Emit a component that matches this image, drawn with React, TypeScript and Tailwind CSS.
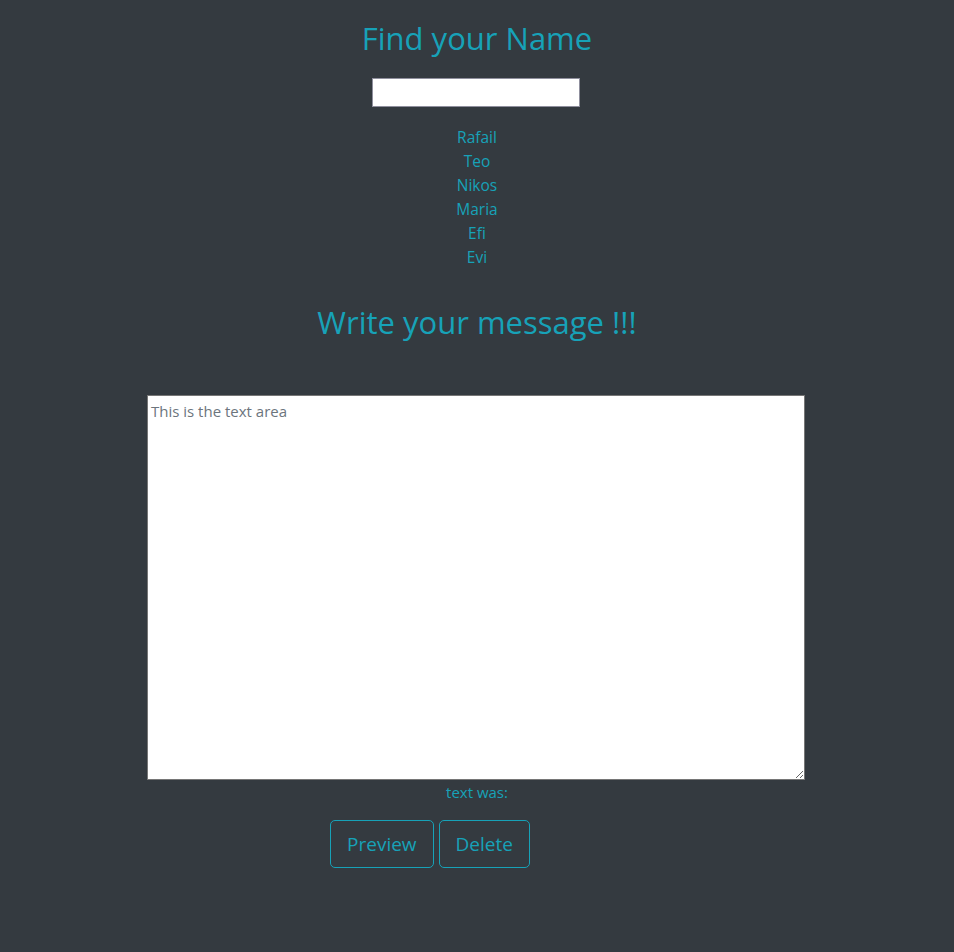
import { useState } from 'react'

const names = ['Rafail', 'Teo', 'Nikos', 'Maria', 'Efi', 'Evi']

export default function App() {
  const [query, setQuery] = useState('')
  const [text, setText] = useState('')

  return (
    <div
      className="min-h-[952px] bg-[#343a40] text-[#17a2b8]"
      style={{ fontFamily: '"Open Sans", "Noto Sans", sans-serif' }}
    >
      <div className="flex flex-col items-center pt-[19px]">
        <h2 className="text-[31px] leading-[38px]">Find your Name</h2>
        <input
          value={query}
          onChange={(e) => setQuery(e.target.value)}
          className="mr-[2px] mt-[21px] h-[29px] w-[208px] border border-[#8f8f9d] bg-white px-1 text-black outline-none"
        />
        <ul className="mt-[18px] flex flex-col items-center text-[15.5px] leading-[24px]">
          {names
            .filter((n) => n.toLowerCase().includes(query.toLowerCase()))
            .map((n) => (
              <li key={n}>{n}</li>
            ))}
        </ul>
        <h2 className="mt-[34px] text-[31px] leading-[38px]">Write your message !!!</h2>
        <textarea
          value={text}
          onChange={(e) => setText(e.target.value)}
          placeholder="This is the text area"
          className="mr-[2px] mt-[54px] h-[385px] w-[658px] border border-[#767676] bg-white px-[3px] pt-[5px] text-[15px] leading-[20px] text-black outline-none placeholder:text-[#6c757d]"
        />
        <p className="text-[15px] leading-[24px]">text was: {''}</p>
        <div className="mt-[16px] flex gap-[5px] pr-[94px]">
          <button className="h-[48px] rounded-[5px] border border-[#17a2b8] px-4 text-[19px] text-[#17a2b8]">
            Preview
          </button>
          <button
            onClick={() => setText('')}
            className="h-[48px] rounded-[5px] border border-[#17a2b8] px-4 text-[19px] text-[#17a2b8]"
          >
            Delete
          </button>
        </div>
      </div>
    </div>
  )
}
